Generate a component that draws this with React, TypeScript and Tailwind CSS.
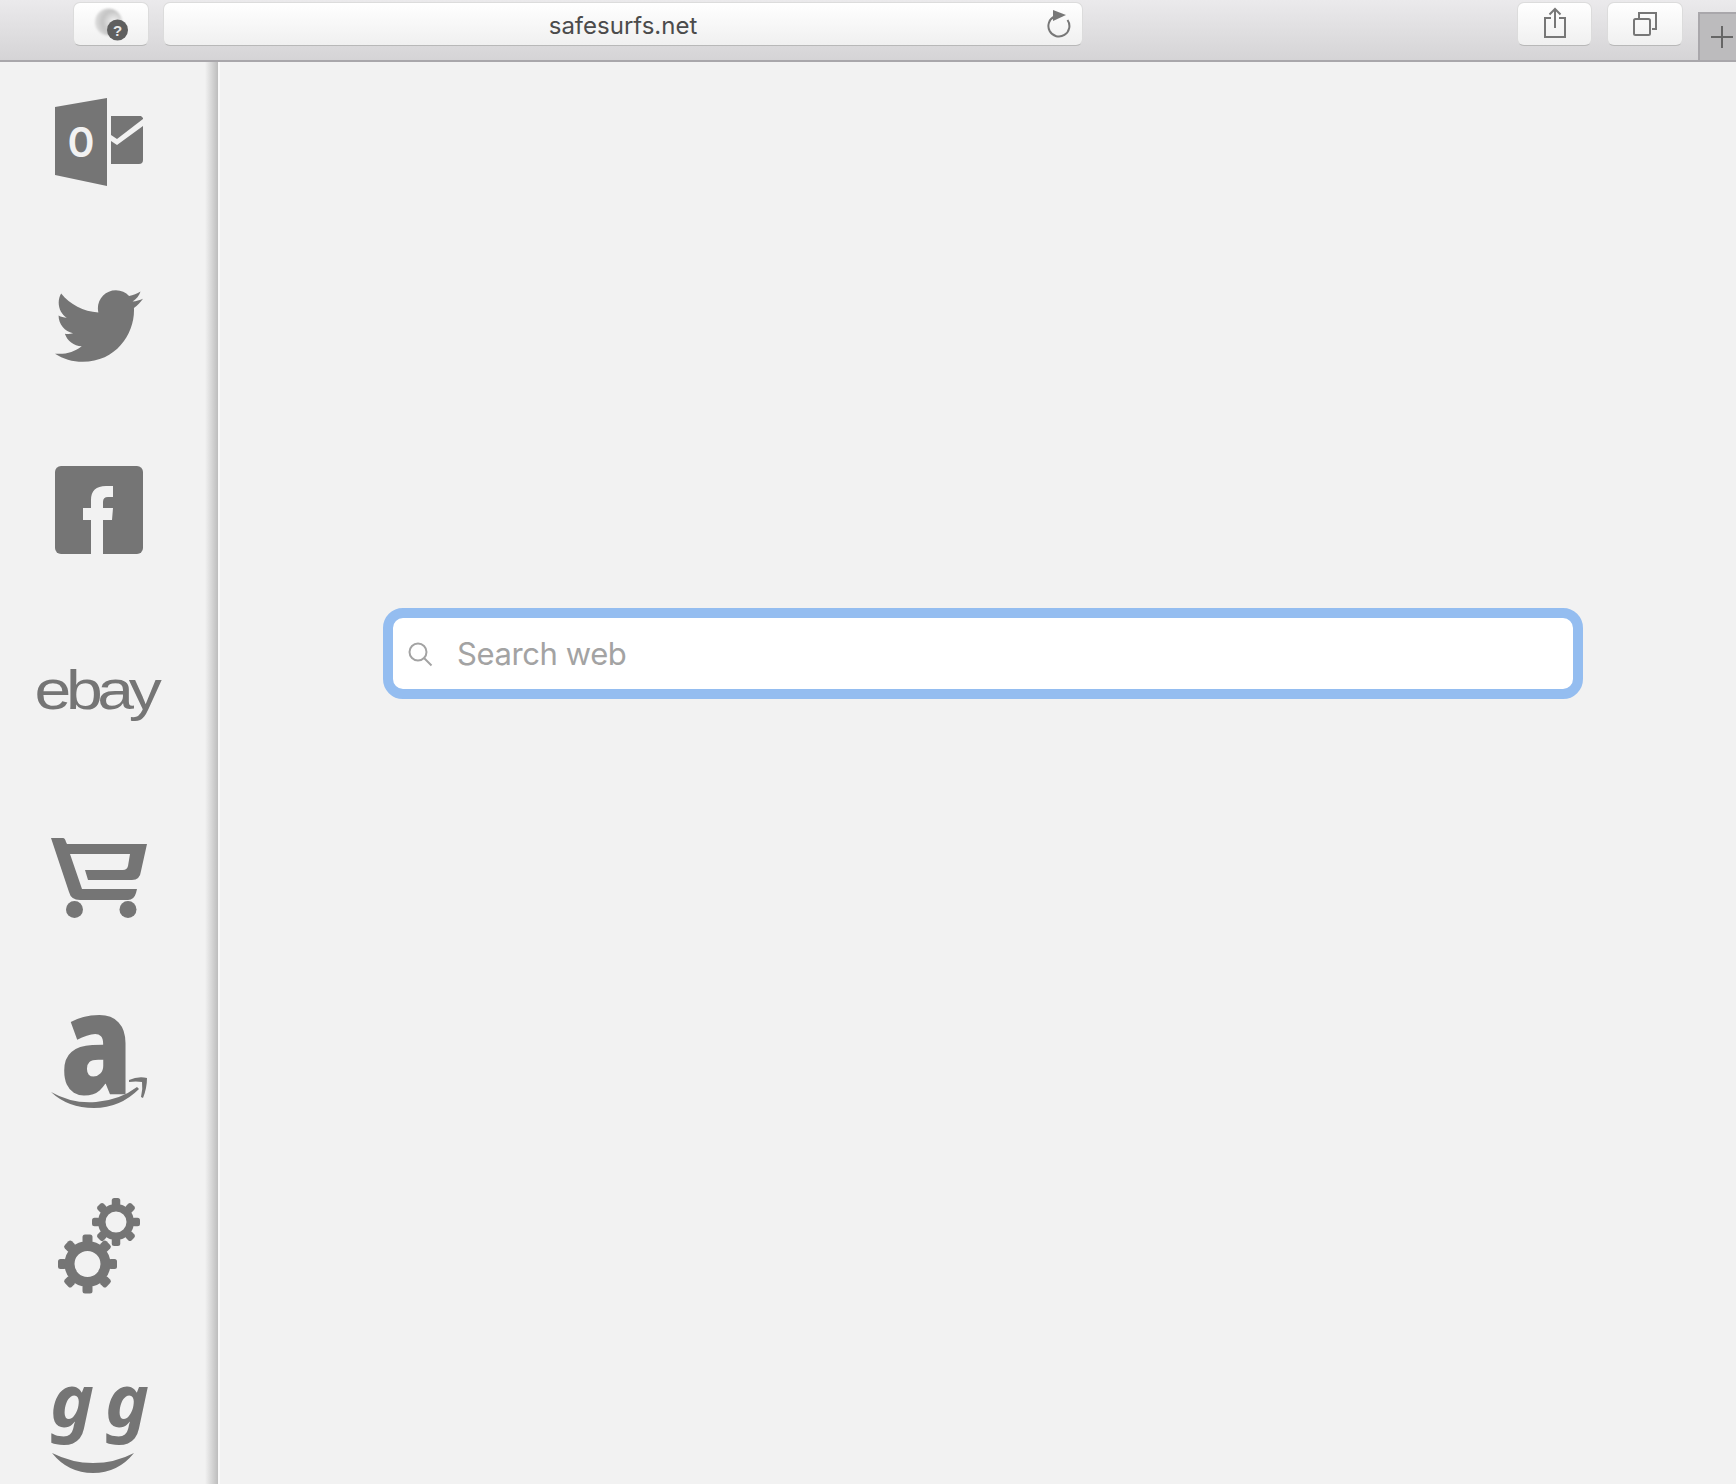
import React from "react";
import { FaTwitter } from "react-icons/fa";

const ICON = "#757575";

function Gear({ cx, cy, r, w, tooth, tw }: { cx: number; cy: number; r: number; w: number; tooth: number; tw: number }) {
  const angles = [0, 45, 90, 135, 180, 225, 270, 315];
  return (
    <g>
      {angles.map((a) => (
        <rect key={a} x={cx - tw / 2} y={cy - tooth} width={tw} height={tooth - r + 2} rx={2.5} fill={ICON} transform={`rotate(${a} ${cx} ${cy})`} />
      ))}
      <circle cx={cx} cy={cy} r={r - w / 2} fill="none" stroke={ICON} strokeWidth={w} />
    </g>
  );
}

function Slot({ children }: { children: React.ReactNode }) {
  return <div className="flex h-24 w-[130px] shrink-0 items-center justify-center">{children}</div>;
}

function Outlook() {
  return (
    <svg className="overflow-visible" width="130" height="96" viewBox="34 94 130 96">
      <path d="M55 107 L107 98 V186 L55 175 Z" fill={ICON} />
      <text x="81" y="157" textAnchor="middle" fill="#f2f2f2" fontFamily="Inter, sans-serif" fontWeight="600" fontSize="41">0</text>
      <path d="M111 116 H141 L143 118 V119 L117 139 L111 135 Z" fill={ICON} />
      <path d="M111 141 L117 145 L143 126 V160 Q143 164 139 164 H111 Z" fill={ICON} />
    </svg>
  );
}

function Facebook() {
  return (
    <svg width="130" height="96" viewBox="34 462 130 96">
      <rect x="55" y="466" width="88" height="88" rx="6" fill={ICON} />
      <path d="M91 554 V520 H83 V508 H91 V500 Q91 486 106 486 H113 V497 H108 Q103 497 103 502 V508 H113 L112 520 H103 V554 Z" fill="#f2f2f2" />
    </svg>
  );
}

function Ebay() {
  return (
    <svg className="overflow-visible" width="130" height="96" viewBox="34 646 130 96">
      <text x="34.500" y="709" fill={ICON} fontFamily="'Liberation Sans', sans-serif" fontSize="56" letterSpacing="-4.500" textLength="122" lengthAdjust="spacingAndGlyphs">ebay</text>
    </svg>
  );
}

function Cart() {
  return (
    <svg width="130" height="96" viewBox="34 830 130 96">
      <path d="M51 838 H63 Q65 838 66 842 L67 844 H147 L141 871 Q140 880 132 880 H88 L85 870 H123 Q127 870 128 866 L130 854 H70 L82 889 H137 L136 893 Q134 900 128 900 H80 Q71 900 69 892 Z" fill={ICON} />
      <circle cx="74.500" cy="909.500" r="8.500" fill={ICON} />
      <circle cx="128" cy="909.500" r="8.500" fill={ICON} />
    </svg>
  );
}

function Amazon() {
  return (
    <svg className="overflow-visible" width="130" height="96" viewBox="34 1014 130 96">
      <text x="60" y="1094" fill={ICON} fontFamily="'Open Sans', sans-serif" fontWeight="800" fontSize="140" textLength="73" lengthAdjust="spacingAndGlyphs">a</text>
      <path d="M51 1092 Q72 1104 96 1102 Q120 1100 137 1087 L139 1089 Q120 1108 94 1108 Q68 1108 51 1092 Z" fill={ICON} />
      <path d="M129 1080 Q138 1076 147 1078 Q147 1088 143 1098 L141 1097 Q143 1089 142 1082 Q136 1081 129 1082 Z" fill={ICON} />
    </svg>
  );
}

function Gears() {
  return (
    <svg width="130" height="96" viewBox="34 1198 130 96">
      <Gear cx={116} cy={1222} r={18} w={7.500} tooth={24} tw={8.500} />
      <Gear cx={87.500} cy={1264} r={23} w={10} tooth={29.500} tw={10} />
    </svg>
  );
}

function GG() {
  return (
    <svg className="overflow-visible" width="130" height="96" viewBox="34 1382 130 96">
      <text x="50" y="1427" fill={ICON} fontFamily="'Noto Sans', sans-serif" fontWeight="700" fontStyle="italic" fontSize="74">g</text>
      <text x="105" y="1427" fill={ICON} fontFamily="'Noto Sans', sans-serif" fontWeight="700" fontStyle="italic" fontSize="74">g</text>
      <path d="M52 1453 Q72 1463 93 1463 Q115 1463 134 1453 Q118 1473 93 1473 Q68 1473 52 1453 Z" fill={ICON} />
    </svg>
  );
}

function ToolbarButton({ className, children }: { className: string; children?: React.ReactNode }) {
  return (
    <div className={`mt-[2px] flex h-[44px] shrink-0 items-center rounded-[7px] border border-[#dcdcdc] border-b-[#b8b8b8] bg-gradient-to-b from-white to-[#f0f0f0] ${className}`}>
      {children}
    </div>
  );
}

export default function App() {
  return (
    <div className="flex h-[1484px] w-[1736px] flex-col overflow-hidden bg-[#f2f2f2] font-['Inter','Liberation_Sans',sans-serif]">
      <header className="flex h-[62px] shrink-0 items-start border-b-2 border-[#a9a7ab] bg-gradient-to-b from-[#ebeaec] to-[#d5d4d6] pl-[73px]">
        <ToolbarButton className="w-[76px] justify-center">
          <svg width="36" height="36" viewBox="0 0 36 36">
            <defs>
              <radialGradient id="globe" cx="0.700" cy="0.500" r="0.700">
                <stop offset="0" stopColor="#f4f4f4" />
                <stop offset="0.600" stopColor="#c4c4c4" />
                <stop offset="1" stopColor="#dedede" />
              </radialGradient>
              <filter id="soft" x="-20%" y="-20%" width="140%" height="140%">
                <feGaussianBlur stdDeviation="1" />
              </filter>
            </defs>
            <circle cx="15.500" cy="16" r="13.500" fill="url(#globe)" filter="url(#soft)" />
            <circle cx="24.500" cy="24" r="10.500" fill="#5f5f5f" />
            <text x="24.500" y="30" textAnchor="middle" fill="#e8e8e8" fontFamily="'Liberation Sans', sans-serif" fontWeight="700" fontSize="15">?</text>
          </svg>
        </ToolbarButton>
        <ToolbarButton className="relative ml-[14px] w-[920px] justify-center pt-[3px]">
          <span className="text-[24px] leading-none text-[#4b4b4b]">safesurfs.net</span>
          <svg className="absolute right-[11px] top-[5px]" width="26" height="32" viewBox="0 0 26 32" fill="none">
            <path d="M9.500 8.500 A10.500 10.500 0 1 0 22.500 12" stroke="#777" strokeWidth="2" />
            <path d="M8 2 L21 7 L8 13 Z" fill="#777" />
          </svg>
        </ToolbarButton>
        <ToolbarButton className="ml-auto w-[75px] justify-center">
          <svg width="26" height="34" viewBox="0 0 26 34" fill="none" stroke="#777" strokeWidth="2">
            <path d="M13 21 V2 M7.500 7.500 L13 2 L18.500 7.500" />
            <path d="M9 11 H3 V30 H23 V11 H17" />
          </svg>
        </ToolbarButton>
        <ToolbarButton className="ml-[15px] w-[76px] justify-center">
          <svg width="26" height="28" viewBox="0 0 26 28" fill="none" stroke="#777" strokeWidth="2">
            <rect x="2" y="9" width="16" height="16" rx="1.500" />
            <path d="M7 8 V3 H24 V19 H20" />
          </svg>
        </ToolbarButton>
        <div className="ml-[15px] mt-[12px] flex h-[48px] w-[38px] shrink-0 items-center border-l-2 border-t-2 border-[#a9a7ab] bg-[#bcbbbd] pl-[11px]">
          <svg width="22" height="22" viewBox="0 0 22 22" stroke="#666" strokeWidth="2">
            <path d="M11 0 V22 M0 11 H22" />
          </svg>
        </div>
      </header>
      <div className="flex min-h-0 flex-1">
        <aside className="flex w-[205px] shrink-0 flex-col items-center gap-[88px] overflow-hidden pr-[7px] pt-8">
          <Slot><Outlook /></Slot>
          <Slot><FaTwitter size={88} color={ICON} /></Slot>
          <Slot><Facebook /></Slot>
          <Slot><Ebay /></Slot>
          <Slot><Cart /></Slot>
          <Slot><Amazon /></Slot>
          <Slot><Gears /></Slot>
          <Slot><GG /></Slot>
        </aside>
        <div className="w-[13px] shrink-0 bg-gradient-to-r from-[#f2f2f2] to-[#bdbdbd]" />
        <div className="w-[2px] shrink-0 bg-[#fafafa]" />
        <main className="min-w-0 flex-1 pl-[163px] pt-[546px]">
          <div className="flex h-[91px] w-[1200px] items-center rounded-[20px] border-[10px] border-[#94bdf0] bg-white pl-[14px]">
            <svg width="26" height="26" viewBox="0 0 26 26" fill="none" stroke="#a3a3a3" strokeWidth="2">
              <circle cx="11" cy="11" r="8.500" />
              <path d="M17 17 L24.500 24.500" />
            </svg>
            <span className="ml-[24px] text-[31px] leading-none tracking-[-0.4px] text-[#a3a3a3]">Search web</span>
          </div>
        </main>
      </div>
    </div>
  );
}
